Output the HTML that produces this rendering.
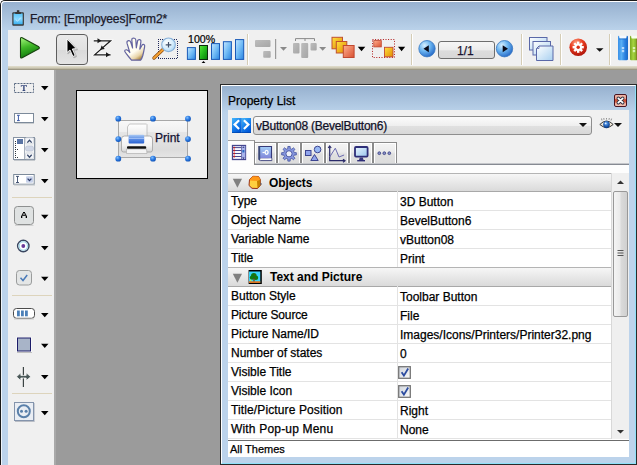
<!DOCTYPE html>
<html><head><meta charset="utf-8">
<style>
*{margin:0;padding:0;box-sizing:border-box}
html,body{width:637px;height:465px;overflow:hidden;background:#fff;font-family:"Liberation Sans",sans-serif;color:#000}
.row span,.txt,.tt{-webkit-text-stroke:0.25px currentColor}
.a{position:absolute}
svg{position:absolute;overflow:visible}
#win{left:0;top:0;width:660px;height:480px;background:#bcd3eb;border-left:1px solid #1a1a1a;border-top:1px solid #1a1a1a;border-top-left-radius:5px;overflow:hidden}
#title{left:1px;top:1px;width:660px;height:29px;background:linear-gradient(#97b1cf,#bad2ea);border-top:1px solid #fff;border-left:1px solid #fff;border-top-left-radius:4px}
#toolbar{left:8px;top:30px;width:640px;height:36px;background:#f0f0f0}
#tband{left:8px;top:66px;width:640px;height:4px;background:linear-gradient(#e2dece,#cdc8b2 50%,#b0ab98 75%,#8a8674)}
#palette{left:8px;top:70px;width:46px;height:400px;background:#f0f0f0;border-right:none}
#pstrip{left:54px;top:70px;width:2px;height:400px;background:#a9a9a9}
#canvas{left:56px;top:70px;width:600px;height:400px;background:#9b9b9b}
.tt{font-size:12px;color:#1e1e1e;white-space:nowrap}
.sep{width:2px;height:31px;top:34px;border-left:1px solid #d5cdb6;border-right:1px solid #fff}
.tri{width:0;height:0;border-left:4px solid transparent;border-right:4px solid transparent;border-top:4px solid #000}
.ptri{width:0;height:0;border-left:4px solid transparent;border-right:4px solid transparent;border-top:4px solid #111}
#form{left:76px;top:90px;width:132px;height:89px;background:#f0f0f0;border:1px solid #000}
#btn{left:118px;top:120px;width:70px;height:38px;border:1px solid #a8a8a8;background:linear-gradient(#f8f8f8,#f0f0f0 30%,#e6e6e6 31%,#dcdcdc 80%,#e4e4e4)}
.h{width:6px;height:6px;border-radius:50%;background:radial-gradient(circle at 40% 35%,#6aaaf0,#1c6ad0)}
#pw{left:220px;top:84px;width:417px;height:381px;border:1px solid #2a2a2a;background:#bcd3eb}
#pwi{left:221px;top:85px;width:415px;height:379px;border:1px solid #fff;border-bottom-color:#8ee0f8;border-right-color:#8ee0f8;background:linear-gradient(#97b1cf 0,#bad2ea 26px,#bcd3eb 30px)}
#pc{left:228px;top:110px;width:401px;height:347px;background:#f0f0f0}
.txt{font-size:12px;white-space:nowrap;color:#000}
.row{left:228px;width:384px;height:19px;border-bottom:1px solid #e3e3e3;background:#fff}
.row .k{position:absolute;left:3px;top:2px;font-size:12px;white-space:nowrap}
.row .v{position:absolute;left:172px;top:3px;font-size:12px;white-space:nowrap}
.row .d{position:absolute;left:169px;top:-1px;width:1px;height:20px;background:#e3e3e3}
.hdr{left:228px;width:384px;height:19px;border-top:1px solid #b4b4b4;border-bottom:1px solid #a8a8a8;background:linear-gradient(#f6f6f6,#dadada)}
.hdr .t{position:absolute;left:42px;top:2px;font-size:12px;font-weight:bold;white-space:nowrap;letter-spacing:-0.25px}
.tab{top:142px;height:21px;border:1px solid #8a8a8a;border-bottom:none;box-shadow:inset 1px 1px 0 #fff,inset -1px 0 0 #fff;background:linear-gradient(#f4f4f4,#ececec 45%,#e0e0e0 55%,#dcdcdc)}
</style></head><body>
<div id="win" class="a"></div>
<div id="title" class="a"></div>
<div class="a" style="left:1px;top:20px;width:1px;height:450px;background:#eef4fa"></div>
<!-- title icon -->
<svg style="left:12px;top:10px" width="13" height="17" viewBox="0 0 13 17">
<defs><linearGradient id="ti" x1="0" y1="0" x2="0" y2="1"><stop offset="0" stop-color="#5ac4f8"/><stop offset="0.5" stop-color="#8ad8ff"/><stop offset="1" stop-color="#38b0f0"/></linearGradient></defs>
<rect x="0.3" y="2.3" width="11.6" height="13.4" rx="1" fill="#383838"/>
<rect x="1.5" y="3.5" width="9.2" height="10.8" fill="url(#ti)"/>
<rect x="4.9" y="0.2" width="2.4" height="2.6" fill="#383838"/>
<rect x="3.3" y="2" width="5.6" height="2" fill="#383838"/>
<path d="M3.6 9.3 L5.5 11.2 L8.8 7.6" stroke="#c8ecff" stroke-width="1" fill="none"/>
</svg>
<div class="a tt" style="left:30px;top:12px;font-size:12px;letter-spacing:-0.13px;color:#1a1a2a">Form: [Employees]Form2*</div>
<div id="toolbar" class="a"></div>
<div id="tband" class="a"></div>
<!-- toolbar icons -->
<svg style="left:19px;top:36px" width="22" height="23" viewBox="0 0 22 23">
<defs><linearGradient id="gp" x1="0" y1="0" x2="0.3" y2="1"><stop offset="0" stop-color="#a8f880"/><stop offset="0.5" stop-color="#40b828"/><stop offset="1" stop-color="#0e780c"/></linearGradient></defs>
<path d="M1.5 2.8 Q1.5 1 3.2 1.8 L19.8 10.8 Q21 11.8 19.8 12.8 L3.2 21.8 Q1.5 22.6 1.5 20.8 Z" fill="url(#gp)" stroke="#17440f" stroke-width="1.1"/>
</svg>
<div class="a" style="left:56px;top:34px;width:32px;height:31px;border:1px solid #5e5e5e;border-radius:4px;background:linear-gradient(#eaeaea,#e2e2e2 50%,#dadada 52%,#e4e4e4)"></div>
<svg style="left:64px;top:38px" width="16" height="22" viewBox="0 0 16 22">
<path d="M3 1 L3 14.5 L6 12 L9 18.5 L11.2 17.4 L8.3 11 L12.2 10.6 Z" transform="translate(1 1)" fill="#000" opacity="0.2" stroke="#000" stroke-width="1.4" stroke-linejoin="round"/>
<path d="M3 1 L3 14.5 L6 12 L9 18.5 L11.2 17.4 L8.3 11 L12.2 10.6 Z" fill="#000" stroke="#fff" stroke-width="0.9" stroke-linejoin="round"/>
</svg>
<svg style="left:92px;top:38px" width="22" height="20" viewBox="0 0 22 20">
<g stroke="#fff" stroke-width="2.6" fill="none" opacity="0.8" stroke-linejoin="miter"><path d="M1.8 2.8 H18.6 L2.6 16.8 H18.6"/></g>
<g stroke="#1a1a1a" stroke-width="1.2" fill="none" stroke-linejoin="miter"><path d="M1.8 2.8 H18.6 L2.6 16.8 H18.6"/></g>
<path d="M9.5 2.8 L5.5 0.3 V5.3Z M18 16.8 L14 14.3 V19.3Z M8.3 11.8 L12.8 10.9 L9.6 7.5Z" fill="#1a1a1a"/>
</svg>
<svg style="left:123px;top:37px" width="24" height="25" viewBox="0 0 24 25">
<defs><linearGradient id="gh" x1="0.2" y1="0.1" x2="0.75" y2="1"><stop offset="0" stop-color="#fffff0"/><stop offset="0.55" stop-color="#fffdf2"/><stop offset="0.8" stop-color="#e8d4a8"/><stop offset="1" stop-color="#a07830"/></linearGradient></defs>
<path d="M8.5 23.2 L5.5 19.5 Q3 16.5 1.8 14.5 Q1.5 12.5 3.6 12.8 Q5.5 13.5 6.8 15.5 L4 6.2 Q3.6 4 5.5 3.6 Q7.2 3.4 7.8 5.4 L9.6 11 L8.8 3 Q8.8 1 10.8 1 Q12.6 1.1 12.8 3 L13.3 10.8 L14.6 3.8 Q15.1 2.2 16.8 2.6 Q18.3 3 17.9 4.8 L16.8 12.2 L19 8.2 Q19.8 7 21 7.6 Q22 8.3 21.6 9.8 Q20.8 14.5 19.8 18.5 Q18.8 22 17.5 23.2Z" fill="url(#gh)" stroke="#6464a0" stroke-width="1.2" stroke-linejoin="round"/>
</svg>
<svg style="left:152px;top:38px" width="27" height="22" viewBox="0 0 27 22">
<g fill="#20285a"><rect x="6" y="1" width="1" height="1"/><rect x="6" y="20" width="1" height="1"/><rect x="8" y="1" width="1" height="1"/><rect x="8" y="20" width="1" height="1"/><rect x="10" y="1" width="1" height="1"/><rect x="10" y="20" width="1" height="1"/><rect x="12" y="1" width="1" height="1"/><rect x="12" y="20" width="1" height="1"/><rect x="14" y="1" width="1" height="1"/><rect x="14" y="20" width="1" height="1"/><rect x="16" y="1" width="1" height="1"/><rect x="16" y="20" width="1" height="1"/><rect x="18" y="1" width="1" height="1"/><rect x="18" y="20" width="1" height="1"/><rect x="20" y="1" width="1" height="1"/><rect x="20" y="20" width="1" height="1"/><rect x="22" y="1" width="1" height="1"/><rect x="22" y="20" width="1" height="1"/><rect x="24" y="1" width="1" height="1"/><rect x="24" y="20" width="1" height="1"/><rect x="6" y="3" width="1" height="1"/><rect x="25" y="3" width="1" height="1"/><rect x="6" y="5" width="1" height="1"/><rect x="25" y="5" width="1" height="1"/><rect x="6" y="7" width="1" height="1"/><rect x="25" y="7" width="1" height="1"/><rect x="6" y="9" width="1" height="1"/><rect x="25" y="9" width="1" height="1"/><rect x="6" y="11" width="1" height="1"/><rect x="25" y="11" width="1" height="1"/><rect x="6" y="13" width="1" height="1"/><rect x="25" y="13" width="1" height="1"/><rect x="6" y="15" width="1" height="1"/><rect x="25" y="15" width="1" height="1"/><rect x="6" y="17" width="1" height="1"/><rect x="25" y="17" width="1" height="1"/><rect x="6" y="19" width="1" height="1"/><rect x="25" y="19" width="1" height="1"/></g>
<path d="M11 11.5 L2 20" stroke="#8a4a10" stroke-width="3.4" stroke-linecap="round"/>
<path d="M11 11.5 L2 20" stroke="#f5a030" stroke-width="2" stroke-linecap="round"/>
<defs><radialGradient id="lz" cx="0.4" cy="0.35" r="0.7"><stop offset="0" stop-color="#ffffff"/><stop offset="0.6" stop-color="#d4ecfc"/><stop offset="1" stop-color="#a8d4f4"/></radialGradient></defs><circle cx="16.5" cy="6.8" r="6.8" fill="url(#lz)" stroke="#88b0d8" stroke-width="1.1"/>

<path d="M16.5 4 V9.6 M13.7 6.8 H19.3" stroke="#40506a" stroke-width="1.2"/>
</svg>
<div class="a" style="left:188px;top:33px;font-size:10.6px;color:#000;white-space:nowrap;-webkit-text-stroke:0.2px #000">100%</div>
<svg style="left:186px;top:38px" width="60" height="26" viewBox="0 0 60 26">
<defs><linearGradient id="gb" x1="0" y1="0" x2="1" y2="1"><stop offset="0" stop-color="#c4e6ff"/><stop offset="0.5" stop-color="#72bcf6"/><stop offset="1" stop-color="#2a84e0"/></linearGradient>
<linearGradient id="gg" x1="0" y1="0" x2="1" y2="1"><stop offset="0" stop-color="#5ae83a"/><stop offset="0.5" stop-color="#22b81a"/><stop offset="1" stop-color="#087a08"/></linearGradient></defs>
<rect x="1.4" y="9.6" width="8" height="11.8" fill="url(#gb)" stroke="#1a5ab8" stroke-width="1"/>
<rect x="13.5" y="7.5" width="8" height="14" fill="url(#gg)" stroke="#0c2a0c" stroke-width="1"/>
<rect x="25.5" y="5.6" width="8" height="15.8" fill="url(#gb)" stroke="#1a5ab8" stroke-width="1"/>
<rect x="37.4" y="3.7" width="8" height="17.7" fill="url(#gb)" stroke="#1a5ab8" stroke-width="1"/>
<rect x="49.5" y="1.6" width="8.2" height="19.8" fill="url(#gb)" stroke="#1a5ab8" stroke-width="1"/>
<path d="M17.5 23 L19.4 24.9 H15.6Z" fill="#000"/>
</svg>
<div class="a sep" style="left:247px"></div>
<svg style="left:254px;top:38px" width="74" height="22" viewBox="0 0 74 22">
<defs><linearGradient id="gy" x1="0" y1="0" x2="1" y2="1"><stop offset="0" stop-color="#bdbdbd"/><stop offset="1" stop-color="#a6a6a6"/></linearGradient></defs>
<rect x="1" y="2" width="15.5" height="7" rx="1" fill="url(#gy)"/>
<rect x="9.2" y="13" width="7.5" height="6.8" rx="1" fill="url(#gy)"/>
<rect x="21" y="1" width="1.2" height="20" fill="#9a9a9a"/>
<path d="M26 9 H33 L29.5 12.8Z" fill="#8a8a8a"/>
<path d="M41.5 3 V0.6 H60.5 V3 M51 0.6 V3" stroke="#8a8a8a" stroke-width="1" fill="none"/>
<rect x="39" y="5" width="6.5" height="10.5" rx="1" fill="url(#gy)"/>
<rect x="47.2" y="5" width="7" height="15" rx="1" fill="url(#gy)"/>
<rect x="56.5" y="5" width="6.2" height="7.5" rx="1" fill="url(#gy)"/>
<path d="M65.2 9 H72.2 L68.7 12.8Z" fill="#8a8a8a"/>
</svg>
<svg style="left:331px;top:36px" width="76" height="23" viewBox="0 0 76 23">
<defs><linearGradient id="go" x1="0" y1="0" x2="1" y2="1"><stop offset="0" stop-color="#ffe040"/><stop offset="1" stop-color="#e08a00"/></linearGradient>
<linearGradient id="gs" x1="0" y1="0" x2="1" y2="1"><stop offset="0" stop-color="#ffb090"/><stop offset="1" stop-color="#d85030"/></linearGradient></defs>
<rect x="1" y="1.3" width="10.5" height="11.5" fill="url(#go)" stroke="#c05030" stroke-width="1"/>
<rect x="5.3" y="5.5" width="10.5" height="11.5" fill="url(#go)" stroke="#c05030" stroke-width="1"/>
<rect x="12.3" y="9.5" width="10.8" height="12" fill="url(#gs)" stroke="#c04830" stroke-width="1"/>
<path d="M26.8 10.7 H34.3 L30.5 15.2Z" fill="#000"/>
<rect x="41.5" y="3.5" width="22" height="18" fill="none" stroke="#b01818" stroke-width="1" stroke-dasharray="1 1.6"/>
<rect x="42.8" y="4.6" width="7.5" height="6.3" fill="url(#gs)" stroke="#c04830" stroke-width="0.8"/>
<rect x="53.5" y="11.3" width="8.5" height="9.5" fill="url(#go)" stroke="#c04830" stroke-width="0.9"/>
<path d="M67 10.7 H74.2 L70.6 15.2Z" fill="#000"/>
</svg>
<div class="a sep" style="left:411px"></div>
<svg style="left:418px;top:40px" width="96" height="19" viewBox="0 0 96 19">
<defs><radialGradient id="gc" cx="0.35" cy="0.3" r="0.8"><stop offset="0" stop-color="#d8f0ff"/><stop offset="0.45" stop-color="#6ab4f0"/><stop offset="1" stop-color="#1a5cc0"/></radialGradient></defs>
<circle cx="9" cy="8.7" r="8.2" fill="url(#gc)" stroke="#3a78c0" stroke-width="0.8"/>
<path d="M5.5 8.7 L10.8 5.2 V12.2Z" fill="#0a0a18"/>
<circle cx="86.5" cy="8.7" r="8.2" fill="url(#gc)" stroke="#3a78c0" stroke-width="0.8"/>
<path d="M90 8.7 L84.7 5.2 V12.2Z" fill="#0a0a18"/>
</svg>
<div class="a" style="left:438px;top:41px;width:57px;height:18px;border:1px solid #6e6e6e;border-radius:3px;background:linear-gradient(#f6f6f6,#ececec 50%,#dcdcdc 55%,#d8d8d8)"></div>
<div class="a txt" style="left:457px;top:44px;color:#1a1430">1/1</div>
<div class="a sep" style="left:521px"></div>
<svg style="left:529px;top:36px" width="27" height="26" viewBox="0 0 27 26">
<defs><linearGradient id="gw" x1="0" y1="0" x2="1" y2="1"><stop offset="0" stop-color="#ffffff"/><stop offset="1" stop-color="#a8d0f0"/></linearGradient></defs>
<rect x="0.5" y="1.5" width="17.5" height="12.5" fill="url(#gw)" stroke="#5a68a8" stroke-width="1"/>
<rect x="4" y="5.5" width="17.5" height="13.5" fill="url(#gw)" stroke="#5a68a8" stroke-width="1"/>
<path d="M10 10 H24 V24.5 H7.5 V12.5Z" fill="url(#gw)" stroke="#5a68a8" stroke-width="1"/>
<path d="M7.5 12.5 H10 V10" fill="none" stroke="#5a68a8" stroke-width="0.8"/>
</svg>
<div class="a sep" style="left:560px"></div>
<svg style="left:569px;top:38px" width="38" height="19" viewBox="0 0 38 19">
<defs><radialGradient id="gr" cx="0.4" cy="0.25" r="0.8"><stop offset="0" stop-color="#ffa080"/><stop offset="0.45" stop-color="#e83c20"/><stop offset="1" stop-color="#a81008"/></radialGradient></defs>
<circle cx="9.2" cy="9.2" r="8.8" fill="url(#gr)"/>
<g fill="#fff" transform="translate(9.2 9.2)">
<circle r="3.8"/>
<rect x="-1.2" y="-5.6" width="2.4" height="11.2"/>
<rect x="-1.2" y="-5.6" width="2.4" height="11.2" transform="rotate(45)"/>
<rect x="-1.2" y="-5.6" width="2.4" height="11.2" transform="rotate(90)"/>
<rect x="-1.2" y="-5.6" width="2.4" height="11.2" transform="rotate(135)"/>
<circle r="1.7" fill="#d83018"/>
</g>
<path d="M27 10.2 H34.5 L30.7 13.7Z" fill="#111"/>
</svg>
<div class="a sep" style="left:609px"></div>
<svg style="left:617px;top:35px" width="22" height="27" viewBox="0 0 22 27">
<defs><linearGradient id="gbk" x1="0" y1="0" x2="1" y2="0"><stop offset="0" stop-color="#3a90e8"/><stop offset="0.35" stop-color="#58aef4"/><stop offset="0.7" stop-color="#2a80e0"/><stop offset="1" stop-color="#1a68c8"/></linearGradient>
<linearGradient id="ggk" x1="0" y1="0" x2="1" y2="0"><stop offset="0" stop-color="#78a820"/><stop offset="0.4" stop-color="#a8d440"/><stop offset="1" stop-color="#6a9818"/></linearGradient></defs>
<path d="M1 2 Q1 0.8 2 0.8 L2.8 3.2 H9 L9.8 0.8 Q11 0.8 11 2 V24 Q11 25.2 9.5 25.2 H2.5 Q1 25.2 1 24Z" fill="url(#gbk)"/>
<rect x="2.6" y="0.8" width="6.6" height="2.6" fill="#f4f8ff"/>
<rect x="2" y="3.4" width="8" height="1.2" fill="#1a68c8" opacity="0.6"/>
<rect x="4.8" y="12" width="2.4" height="2.2" fill="#c8e4ff" opacity="0.85"/><rect x="4.8" y="15" width="2.4" height="2.2" fill="#c8e4ff" opacity="0.85"/>
<path d="M13 2 Q13 0.8 14 0.8 L14.8 3.2 H19.5 L20.2 0.8 Q21 0.8 21 2 V24 Q21 25.2 19.8 25.2 H14.2 Q13 25.2 13 24Z" fill="url(#ggk)"/>
<rect x="14.6" y="0.8" width="5.4" height="2.6" fill="#f8fff0"/>
<rect x="15.8" y="12" width="2.4" height="2.2" fill="#e8ffd0" opacity="0.8"/><rect x="15.8" y="15" width="2.4" height="2.2" fill="#e8ffd0" opacity="0.8"/>
<rect x="19" y="4" width="3" height="21" fill="#8a6a20" opacity="0.5"/>
</svg>
<div id="palette" class="a"></div>
<div id="canvas" class="a"></div>
<div id="pstrip" class="a"></div>
<!-- palette icons -->
<svg style="left:0;top:0" width="60" height="465" viewBox="0 0 60 465">
<!-- triangles -->
<g fill="#000">
<path d="M41 86 H48.5 L44.75 90.3Z"/>
<path d="M41 117 H48.5 L44.75 121.3Z"/>
<path d="M41 148 H48.5 L44.75 152.3Z"/>
<path d="M41 179 H48.5 L44.75 183.3Z"/>
<path d="M41 214.8 H48.5 L44.75 219.1Z"/>
<path d="M41 246 H48.5 L44.75 250.3Z"/>
<path d="M41 276.8 H48.5 L44.75 281.1Z"/>
<path d="M41 312.9 H48.5 L44.75 317.2Z"/>
<path d="M41 343.8 H48.5 L44.75 348.1Z"/>
<path d="M41 374.9 H48.5 L44.75 379.2Z"/>
<path d="M41 410.9 H48.5 L44.75 415.2Z"/>
</g>
<!-- separators -->
<rect x="12" y="197" width="40" height="1" fill="#ddd4bc"/>
<rect x="12" y="295" width="40" height="1" fill="#ddd4bc"/>
<rect x="12" y="393" width="40" height="1" fill="#ddd4bc"/>
<!-- static text -->
<rect x="14.5" y="83.5" width="19" height="9" fill="none" stroke="#5a6a82" stroke-width="1" stroke-dasharray="2 1"/>
<path d="M20.8 85.3 H27 V86.8 H26.3 L26 86 H24.6 V90 L25.4 90.4 V90.9 H22.4 V90.4 L23.2 90 V86 H21.8 L21.5 86.8 H20.8Z" fill="#38487c"/>
<!-- text field -->
<rect x="14.5" y="113.5" width="19" height="9" fill="#fff" stroke="#7c8a9a" stroke-width="1"/>
<rect x="15" y="123" width="19" height="1" fill="#c8cccf"/>
<path d="M17 115.3 H19.8 M18.4 115.3 V120.6 M17 120.6 H19.8" stroke="#3c5aa8" stroke-width="1" fill="none"/>
<!-- list -->
<rect x="13.5" y="137.5" width="21" height="22" fill="#f2f4f6" stroke="#8894a4" stroke-width="1"/>
<rect x="14" y="160" width="21" height="1" fill="#c4c8cc"/><rect x="35" y="138" width="1" height="22" fill="#d0d4d8"/>
<rect x="14" y="138" width="10" height="21" fill="#fff"/>
<rect x="24" y="138" width="1" height="21" fill="#a8b0bc"/>
<rect x="17" y="139" width="6" height="5" fill="#5a74a4"/>
<g fill="#303840"><rect x="15" y="141" width="1" height="1"/><rect x="15" y="143" width="1" height="1"/><rect x="15" y="145" width="1" height="1"/><rect x="15" y="147" width="1" height="1"/><rect x="15" y="149" width="1" height="1"/><rect x="15" y="151" width="1" height="1"/><rect x="15" y="153" width="1" height="1"/><rect x="15" y="155" width="1" height="1"/><rect x="15" y="157" width="1" height="1"/><rect x="17" y="149" width="1" height="1"/><rect x="17" y="157" width="1" height="1"/></g>
<rect x="25.5" y="137.8" width="8" height="6" rx="1" fill="#f4f6fa" stroke="#c8ccd4" stroke-width="0.6"/>
<rect x="25.5" y="146" width="8" height="5" rx="2" fill="#cfd6e6" stroke="#b8c0d0" stroke-width="0.6"/>
<rect x="25.5" y="153" width="8" height="5.8" rx="1" fill="#f4f6fa" stroke="#c8ccd4" stroke-width="0.6"/>
<path d="M27.3 142.6 L29.5 140.2 L31.7 142.6" stroke="#38486a" stroke-width="1.3" fill="none"/>
<path d="M27.3 154.8 L29.5 157.2 L31.7 154.8" stroke="#38486a" stroke-width="1.3" fill="none"/>
<!-- combo -->
<rect x="13.7" y="174.5" width="20.5" height="9.7" fill="#fff" stroke="#7c8a9a" stroke-width="1"/>
<rect x="14" y="184.6" width="21" height="1" fill="#c8cccf"/>
<path d="M16 176.4 H19 M17.5 176.4 V182.5 M16 182.5 H19" stroke="#38486a" stroke-width="0.9" fill="none"/>
<rect x="26" y="176.2" width="7" height="6.5" rx="1" fill="#c8d2ea"/>
<path d="M27.6 178.6 L29.5 180.6 L31.4 178.6" stroke="#2a3a68" stroke-width="1.3" fill="none"/>
<!-- button -->
<rect x="14.5" y="206.5" width="19" height="18" rx="3" fill="#dfe2e2" stroke="#8e9090" stroke-width="1"/>
<rect x="15" y="225" width="18.5" height="1" fill="#d2d2d2"/>
<g fill="#000"><rect x="23" y="212" width="2" height="1.5"/><rect x="22" y="213.5" width="1.3" height="1.3"/><rect x="24.7" y="213.5" width="1.3" height="1.3"/><rect x="21.5" y="214.8" width="5" height="1"/><rect x="21" y="215.8" width="1.3" height="2.2"/><rect x="25.7" y="215.8" width="1.3" height="2.2"/></g>
<!-- radio -->
<circle cx="23.3" cy="246" r="5.7" fill="#fff" stroke="#3a4660" stroke-width="1.4"/>
<circle cx="23.3" cy="246" r="4.2" fill="none" stroke="#9ad4e8" stroke-width="1.1"/>
<circle cx="23.3" cy="246" r="1.9" fill="#6a3a98"/>
<!-- checkbox -->
<rect x="16.5" y="270.5" width="15" height="14.5" rx="3" fill="#e4e6e6" stroke="#9a9c9c" stroke-width="1"/>
<path d="M20.5 277.8 L23 280.5 L27.2 275" stroke="#4a7ab8" stroke-width="1.5" fill="none"/>
<!-- progress -->
<rect x="13.5" y="308.5" width="21" height="9.8" rx="3" fill="#fff" stroke="#4c4c4c" stroke-width="1"/>
<rect x="14" y="318.5" width="20" height="1" fill="#c8c8c8"/>
<rect x="17" y="310.5" width="2.8" height="5.8" fill="#4c80b8"/>
<rect x="21" y="310.5" width="2.8" height="5.8" fill="#4c80b8"/>
<rect x="25" y="310.5" width="2.8" height="5.8" fill="#4c80b8"/>
<!-- rectangle -->
<rect x="16.5" y="337" width="15" height="15" fill="#fff"/>
<rect x="17.5" y="338" width="13" height="13" fill="#a8b4c8" stroke="#1c1c68" stroke-width="1"/>
<rect x="17" y="352" width="15" height="1" fill="#c0c0c0"/>
<!-- splitter -->
<rect x="22.8" y="367" width="1.2" height="20" fill="#3c4444"/>
<path d="M16.5 376.7 L20.8 372.8 V375.4 H26.2 V372.8 L30.8 376.7 L26.2 380.6 V378 H20.8 V380.6Z" fill="#4a5858" stroke="#fff" stroke-width="0.7" stroke-linejoin="round"/>
<!-- plugin -->
<rect x="15" y="421" width="19.5" height="1" fill="#b8bcc4"/><rect x="34" y="403" width="1" height="19" fill="#c8ccd4"/><rect x="14.5" y="402.5" width="19" height="18" fill="#eaeef4" stroke="#8494ac" stroke-width="1"/>
<circle cx="23.8" cy="411.3" r="6" fill="none" stroke="#5a80aa" stroke-width="2"/>
<circle cx="21.5" cy="411.3" r="1.5" fill="#5a80aa"/>
<circle cx="26.1" cy="411.3" r="1.5" fill="#5a80aa"/>
</svg>

<!-- form -->
<div id="form" class="a"></div>
<div id="btn" class="a"></div>
<div class="a txt" style="left:155px;top:131px;color:#101030">Print</div>
<svg style="left:120px;top:122px" width="34" height="34" viewBox="0 0 34 34">
<defs><linearGradient id="pp" x1="0" y1="0" x2="0" y2="1"><stop offset="0" stop-color="#fff"/><stop offset="1" stop-color="#e8e8e8"/></linearGradient>
<linearGradient id="pb" x1="0" y1="0" x2="0" y2="1"><stop offset="0" stop-color="#fdfdfd"/><stop offset="0.6" stop-color="#f2f2f2"/><stop offset="1" stop-color="#d4d4d4"/></linearGradient>
<linearGradient id="pbl" x1="0" y1="0" x2="0" y2="1"><stop offset="0" stop-color="#a8c8f4"/><stop offset="0.5" stop-color="#5a8ce4"/><stop offset="1" stop-color="#2a62d0"/></linearGradient></defs>
<path d="M8 4 L9.5 2 H26.5 L27 2.5 V15 H7.5 V5Z" fill="url(#pp)" stroke="#b8b8b8" stroke-width="0.8"/>
<path d="M1.5 17 Q1.5 14 4.5 14 H29.5 Q32.5 14 32.5 17 V28 Q32.5 30 30.5 30 H3.5 Q1.5 30 1.5 28Z" fill="url(#pb)" stroke="#a8a8a8" stroke-width="0.9"/>
<rect x="8.6" y="12.8" width="15.6" height="8.6" rx="1" fill="url(#pbl)"/>
<rect x="9" y="16" width="15" height="0.8" fill="#c8dcff" opacity="0.7"/>
<rect x="7" y="24.2" width="19.2" height="2.9" rx="1" fill="#101010"/>
<path d="M6.5 27 H26.5 L27 31.5 H6.5Z" fill="#f4f4f4" stroke="#b0b0b0" stroke-width="0.7"/>
</svg>
<svg style="left:114px;top:114px" width="80" height="50" viewBox="0 0 80 50">
<defs><radialGradient id="hg" cx="0.38" cy="0.32" r="0.75"><stop offset="0" stop-color="#80c0ff"/><stop offset="0.5" stop-color="#2a78e0"/><stop offset="1" stop-color="#0a4cb0"/></radialGradient></defs>
<g fill="url(#hg)">
<circle cx="4.3" cy="4.7" r="2.9"/><circle cx="39" cy="4.7" r="2.9"/><circle cx="74" cy="4.7" r="2.9"/>
<circle cx="4.3" cy="25.1" r="2.9"/><circle cx="74" cy="25.1" r="2.9"/>
<circle cx="4.3" cy="44.7" r="2.9"/><circle cx="39" cy="44.7" r="2.9"/><circle cx="74" cy="44.7" r="2.9"/>
</g></svg>

<!-- property window -->
<div id="pw" class="a"></div>
<div id="pwi" class="a"></div>
<div class="a txt" style="left:228px;top:94px;color:#000">Property List</div>
<div id="pc" class="a"></div>
<!-- close btn -->
<div class="a" style="left:614px;top:94px;width:13px;height:13px;border:1px solid #4a1420;border-radius:2px;background:linear-gradient(#f0b8a8,#e8a090 35%,#c84a30 42%,#d05a3c 62%,#eca494 75%,#f4c4b4)"></div>
<svg style="left:614px;top:94px" width="13" height="13" viewBox="0 0 13 13"><path d="M4.3 4.3 L8.7 8.7 M8.7 4.3 L4.3 8.7" stroke="#2a3040" stroke-width="3.4" stroke-linecap="round"/><path d="M4.3 4.3 L8.7 8.7 M8.7 4.3 L4.3 8.7" stroke="#fff" stroke-width="1.7" stroke-linecap="round"/></svg>

<!-- nav icon -->
<svg style="left:232px;top:118px" width="19" height="15" viewBox="0 0 19 15">
<defs><linearGradient id="nv" x1="0" y1="0" x2="0.6" y2="1"><stop offset="0" stop-color="#48b8fa"/><stop offset="0.5" stop-color="#1a84ee"/><stop offset="1" stop-color="#0058d8"/></linearGradient></defs>
<rect x="0" y="0" width="9.5" height="15" fill="url(#nv)"/>
<rect x="9.5" y="0" width="9.5" height="15" fill="url(#nv)"/>
<rect x="9.2" y="0" width="0.6" height="15" fill="#0a5ac0" opacity="0.5"/>
<rect x="0" y="14" width="19" height="1" fill="#0040a0" opacity="0.6"/>
<path d="M6.3 3 L2.6 6.6 L6.3 10.2 M12.7 3 L16.4 6.6 L12.7 10.2" stroke="#fff" stroke-width="2.2" fill="none" stroke-linecap="square"/>
</svg>
<!-- dropdown -->
<div class="a" style="left:253px;top:116px;width:339px;height:19px;border:1px solid #8e8e8e;border-radius:3px;background:linear-gradient(#fbfbfb,#efefef 50%,#e0e0e0 55%,#d8d8d8)"></div>
<div class="a txt" style="left:256px;top:119px;color:#101028;letter-spacing:-0.24px">vButton08 (BevelButton6)</div>
<div class="a ptri" style="left:579px;top:123px"></div>
<!-- eye -->
<svg style="left:599px;top:118px" width="15" height="12" viewBox="0 0 15 12">
<defs><radialGradient id="ir" cx="0.45" cy="0.35" r="0.7"><stop offset="0" stop-color="#6aa8f0"/><stop offset="0.6" stop-color="#1a58b0"/><stop offset="1" stop-color="#0a2a60"/></radialGradient></defs>
<path d="M3 2.5 L2.5 0.5 M5 1.8 L4.8 0 M7.5 1.5 V0 M10 1.8 L10.3 0 M12 2.5 L12.6 0.6" stroke="#6a6a6a" stroke-width="0.7"/>
<path d="M0.8 6.5 Q7.5 -0.5 14.2 6.5 Q7.5 12.5 0.8 6.5Z" fill="#f0e8d8" stroke="#3a3a3a" stroke-width="1"/>
<ellipse cx="7.5" cy="6.6" rx="3.3" ry="3.6" fill="url(#ir)"/>
<circle cx="6.6" cy="5.4" r="0.9" fill="#e0f0ff"/>
</svg>
<div class="a ptri" style="left:614px;top:123px"></div>

<!-- tabs -->
<div class="a" style="left:228px;top:164px;width:401px;height:9px;background:#fdfdfd"></div>
<div class="a" style="left:254px;top:163px;width:375px;height:2px;background:linear-gradient(#c4c6ca 50%,#868a92 50%)"></div>
<div class="a" style="left:228px;top:140px;width:27px;height:25px;background:#fdfdfd;border-top:1px solid #a0a0a0;border-right:1px solid #8c8c8c"></div>
<div class="a tab" style="left:254px;width:23px"></div>
<div class="a tab" style="left:277px;width:24px"></div>
<div class="a tab" style="left:301px;width:24px"></div>
<div class="a tab" style="left:325px;width:24px"></div>
<div class="a tab" style="left:349px;width:24px"></div>
<div class="a tab" style="left:373px;width:24px"></div>
<svg style="left:228px;top:140px" width="170" height="25" viewBox="0 0 170 25">
<!-- list icon -->
<rect x="4.5" y="5.5" width="13" height="14" fill="#f8f8ff" stroke="#46468e" stroke-width="1.3"/>
<rect x="13.3" y="6" width="4" height="13" fill="#a8b4ec"/>
<rect x="13" y="6" width="0.8" height="13" fill="#6a6aa0"/>
<g stroke="#46468e" stroke-width="1"><path d="M5 7.6 H13.3 M5 10.5 H13.3 M5 13.5 H13.3 M5 16.5 H13.3"/></g>
<g fill="#d01818"><circle cx="6.3" cy="7.6" r="0.9"/><circle cx="6.3" cy="10.5" r="0.9"/><circle cx="6.3" cy="13.5" r="0.9"/><circle cx="6.3" cy="16.5" r="0.9"/></g>
<path d="M14.2 7.8 L15.4 6.4 L16.6 7.8Z M14.2 17.5 L15.4 18.9 L16.6 17.5Z" fill="#2a2a6a"/>
<rect x="14.4" y="10" width="2" height="2.5" fill="#2a6ac0"/>
<!-- book -->
<defs><linearGradient id="bk" x1="0" y1="0" x2="0" y2="1"><stop offset="0" stop-color="#a4d0fa"/><stop offset="1" stop-color="#7c7cd4"/></linearGradient></defs>
<path d="M31 6.5 H43.5 V18.5 H32.5 Q31 18.5 31 19.5Z" fill="url(#bk)" stroke="#363a78" stroke-width="1.1"/>
<rect x="30.6" y="6" width="1.6" height="14" fill="#3a4a78"/>
<path d="M31.2 20 Q31.5 20.6 32.5 20.6 H43.8 V18.4" fill="#fff" stroke="#363a78" stroke-width="0.9"/>
<rect x="32.3" y="18.3" width="11" height="1.6" fill="#fff"/>
<path d="M34.5 12.5 H36.8" stroke="#fff" stroke-width="1.2"/><ellipse cx="38.6" cy="12.3" rx="1.5" ry="2" fill="none" stroke="#fff" stroke-width="1.3"/>
<!-- gear -->
<g transform="translate(61 13.8)">
<path d="M5.17 -1.16 L7.31 -1.14 L7.31 1.14 L5.17 1.16 L4.90 2.03 L4.48 2.84 L5.97 4.37 L4.37 5.97 L2.84 4.48 L2.03 4.90 L1.16 5.17 L1.14 7.31 L-1.14 7.31 L-1.16 5.17 L-2.03 4.90 L-2.84 4.48 L-4.37 5.97 L-5.97 4.37 L-4.48 2.84 L-4.90 2.03 L-5.17 1.16 L-7.31 1.14 L-7.31 -1.14 L-5.17 -1.16 L-4.90 -2.03 L-4.48 -2.84 L-5.97 -4.37 L-4.37 -5.97 L-2.84 -4.48 L-2.03 -4.90 L-1.16 -5.17 L-1.14 -7.31 L1.14 -7.31 L1.16 -5.17 L2.03 -4.90 L2.84 -4.48 L4.37 -5.97 L5.97 -4.37 L4.48 -2.84 L4.90 -2.03Z" fill="#8898e0" stroke="#4c5aa4" stroke-width="0.9"/>
<circle r="3.1" fill="#eef0f8" stroke="#4c5aa4" stroke-width="1"/>
</g>
<!-- shapes -->
<rect x="77.5" y="10.5" width="5.5" height="5" fill="#90a4ec" stroke="#3c4490" stroke-width="1"/>
<circle cx="89.6" cy="9.5" r="3.3" fill="#98b8f4" stroke="#3c4490" stroke-width="1"/>
<path d="M86.5 14.5 L90.2 20.5 H82.8Z" fill="#90a4ec" stroke="#3c4490" stroke-width="1"/>
<!-- chart -->
<g stroke="#2a2a6a" stroke-width="1.2" fill="none">
<path d="M101.7 6.5 V20.7 H116.5"/><path d="M100.2 8 L101.7 6 L103.2 8 M115 19.2 L117 20.7 L115 22.2"/>
</g>
<path d="M101.7 17 L107.3 8.2 L111 17 L116.1 15" stroke="#6a6ab0" stroke-width="1" fill="none"/>
<!-- monitor -->
<defs><linearGradient id="mn" x1="0" y1="0" x2="1" y2="1"><stop offset="0" stop-color="#eaf6ff"/><stop offset="1" stop-color="#98c4ec"/></linearGradient></defs>
<rect x="127" y="7" width="12.6" height="9.6" rx="1" fill="url(#mn)" stroke="#2e2e78" stroke-width="1.8"/>
<path d="M131.8 17.5 H134.8 L135.6 20 H131Z" fill="#3a3a80"/><rect x="129.2" y="20" width="7.8" height="1.4" fill="#2e2e78"/>
<!-- dots -->
<g fill="#8890c8" stroke="#3a4080" stroke-width="0.8"><circle cx="151.3" cy="13.2" r="1.4"/><circle cx="156.3" cy="13.2" r="1.4"/><circle cx="161.3" cy="13.2" r="1.4"/></g>
</svg>
<!-- grid -->
<div class="a" style="left:228px;top:173px;width:384px;height:265px;background:#fff"></div>
<div class="a hdr" style="top:173px;height:19px"><div class="t" style="left:41px;letter-spacing:-0.1px">Objects</div></div>
<div class="a row" style="top:192px"><span class="k">Type</span><span class="d"></span><span class="v">3D Button</span></div>
<div class="a row" style="top:211px"><span class="k">Object Name</span><span class="d"></span><span class="v">BevelButton6</span></div>
<div class="a row" style="top:230px"><span class="k">Variable Name</span><span class="d"></span><span class="v">vButton08</span></div>
<div class="a row" style="top:249px"><span class="k">Title</span><span class="d"></span><span class="v">Print</span></div>
<div class="a hdr" style="top:267px;height:20px"><div class="t" style="letter-spacing:0">Text and Picture</div></div>
<div class="a row" style="top:287px"><span class="k">Button Style</span><span class="d"></span><span class="v">Toolbar Button</span></div>
<div class="a row" style="top:306px"><span class="k" style="letter-spacing:-0.15px">Picture Source</span><span class="d"></span><span class="v">File</span></div>
<div class="a row" style="top:325px"><span class="k">Picture Name/ID</span><span class="d"></span><span class="v">Images/Icons/Printers/Printer32.png</span></div>
<div class="a row" style="top:344px"><span class="k">Number of states</span><span class="d"></span><span class="v">0</span></div>
<div class="a row" style="top:363px"><span class="k">Visible Title</span><span class="d"></span><span class="v"></span></div>
<div class="a row" style="top:382px"><span class="k">Visible Icon</span><span class="d"></span><span class="v"></span></div>
<div class="a row" style="top:401px"><span class="k" style="letter-spacing:0.12px">Title/Picture Position</span><span class="d"></span><span class="v">Right</span></div>
<div class="a row" style="top:420px"><span class="k" style="letter-spacing:0.18px">With Pop-up Menu</span><span class="d"></span><span class="v">None</span></div>
<svg style="left:228px;top:170px" width="40" height="120" viewBox="0 0 40 120">
<path d="M4.8 8.8 H14 L9.4 17.7Z" fill="#808080"/>
<path d="M4.8 103.8 H14 L9.4 112.7Z" fill="#808080"/>
<!-- cube -->
<path d="M21.5 9.5 L25 6.3 L30.5 6.5 L32.3 9.5 V15.5 L29.5 18.5 L24 18.3 L21 15.5Z" fill="#ffd040" stroke="#8a1a10" stroke-width="0.9"/>
<path d="M21.5 9.5 L25 6.3 L30.5 6.5 L32.3 9.5 L29 11 L22 10.5Z" fill="#ff9818"/>
<path d="M29 11 L32.3 9.5 V15.5 L29.5 18.5Z" fill="#c88000"/>
<path d="M32.5 12.5 L34 14 L32.5 15.5Z" fill="#5a5a6a"/>
<!-- picture -->
<rect x="20" y="100" width="13.8" height="14" fill="#000"/>
<rect x="20" y="100" width="1" height="14" fill="#8a8a8a"/>
<rect x="21" y="101.5" width="11.3" height="11.2" fill="#38d4fa"/>
<rect x="21" y="111.3" width="11.3" height="1.6" fill="#f07010"/>
<circle cx="25.8" cy="105.8" r="2.8" fill="#107a10"/><circle cx="24" cy="107.6" r="2.2" fill="#107a10"/><circle cx="28" cy="107.8" r="2.2" fill="#107a10"/>
<rect x="25.4" y="108" width="1.2" height="3.4" fill="#6a3a10"/>
<circle cx="27" cy="105" r="0.6" fill="#a02010"/>
<circle cx="22.8" cy="110.2" r="0.8" fill="#f0f020"/>
</svg>
<svg style="left:396px;top:360px" width="20" height="40" viewBox="0 0 20 40">
<defs><linearGradient id="cbg" x1="0" y1="0" x2="1" y2="1"><stop offset="0" stop-color="#cfd4dc"/><stop offset="1" stop-color="#fafafa"/></linearGradient></defs>
<rect x="2.7" y="6.7" width="11.6" height="11.6" fill="url(#cbg)" stroke="#767676" stroke-width="1.3"/>
<path d="M5.6 12.2 L7.9 15.6 L12.2 8.5" stroke="#2c4ca0" stroke-width="1.8" fill="none"/>
<rect x="2.7" y="25.7" width="11.6" height="11.6" fill="url(#cbg)" stroke="#767676" stroke-width="1.3"/>
<path d="M5.6 31.2 L7.9 34.6 L12.2 27.5" stroke="#2c4ca0" stroke-width="1.8" fill="none"/>
</svg>
<!-- scrollbar -->
<div class="a" style="left:612px;top:173px;width:17px;height:265px;background:#efefef"></div>
<div class="a" style="left:613px;top:191px;width:15px;height:126px;border:1px solid #989898;border-radius:2px;background:linear-gradient(90deg,#f4f4f4,#eaeaea 45%,#dadada 55%,#d0d0d0)"></div>
<svg style="left:612px;top:174px" width="17" height="264" viewBox="0 0 17 264">
<path d="M5 10 L8.5 6.5 L12 10Z" fill="#333"/>
<path d="M5 256 L8.5 259.5 L12 256Z" fill="#333"/>
<path d="M5.5 76.5 H11.5 M5.5 79 H11.5 M5.5 81.5 H11.5" stroke="#555" stroke-width="1"/>
</svg>
<!-- bottom -->
<div class="a" style="left:228px;top:439px;width:401px;height:1px;background:#fff"></div>
<div class="a" style="left:228px;top:440px;width:401px;height:1px;background:#6c6c6c"></div>
<div class="a" style="left:611px;top:173px;width:1px;height:266px;background:#d8d8d8"></div>
<div class="a" style="left:228px;top:441px;width:401px;height:16px;background:#fff"></div>
<div class="a txt" style="left:230px;top:443px;font-size:11px">All Themes</div>
</body></html>
